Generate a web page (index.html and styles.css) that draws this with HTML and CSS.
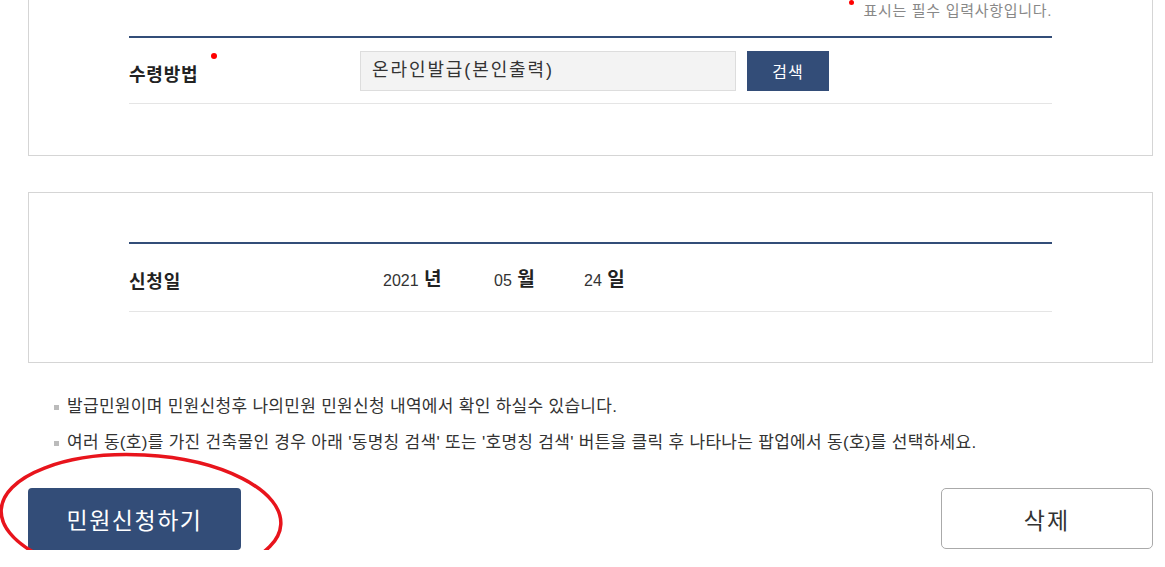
FILE: index.html
```html
<!DOCTYPE html>
<html lang="ko">

<head>
    <meta charset="UTF-8">
    <meta name="viewport" content="width=device-width, initial-scale=1.0">
    <title>민원신청</title>
    <link rel="stylesheet" href="styles.css">
</head>

<body>
    <div id="contenido">
        <div class="panel panel-cortado">
            <p class="aviso"><span class="punto"></span>표시는 필수 입력사항입니다.</p>
            <div class="tabla">
                <div class="fila">
                    <div class="etiqueta requerido">수령방법</div>
                    <div class="valor">
                        <div class="campo">온라인발급(본인출력)</div>
                        <button class="boton-buscar">검색</button>
                    </div>
                </div>
            </div>
        </div>

        <div class="panel panel-fecha">
            <div class="tabla">
                <div class="fila fila-fecha">
                    <div class="etiqueta">신청일</div>
                    <div class="valor fecha">
                        <span class="anio">2021 <b>년</b></span>
                        <span class="mes">05 <b>월</b></span>
                        <span>24 <b>일</b></span>
                    </div>
                </div>
            </div>
        </div>

        <ul class="notas">
            <li>발급민원이며 민원신청후 나의민원 민원신청 내역에서 확인 하실수 있습니다.</li>
            <li>여러 동(호)를 가진 건축물인 경우 아래 '동명칭 검색' 또는 '호명칭 검색' 버튼을 클릭 후 나타나는 팝업에서 동(호)를 선택하세요.</li>
        </ul>

        <div class="acciones">
            <button class="boton-enviar">민원신청하기</button>
            <button class="boton-borrar">삭제</button>
            <svg class="marca" width="300" height="140" viewBox="0 0 300 140">
                <ellipse cx="141" cy="65" rx="140" ry="62" transform="rotate(3 141 65)" fill="none" stroke="#e8141c" stroke-width="3.5"/>
            </svg>
        </div>
    </div>
</body>

</html>
```

FILE: styles.css
```css
* {
    box-sizing: border-box;
}

body {
    margin: 0;
    background-color: white;
    font-family: "Liberation Sans", "Noto Sans CJK KR", sans-serif;
    color: #333;
}

#contenido {
    width: 1153px;
    padding-left: 28px;
}

.panel {
    border: 1px solid #d5d5d5;
    padding: 0 100px;
}

.panel-cortado {
    border-top: 0;
    padding-bottom: 51px;
}

.panel-fecha {
    margin-top: 36px;
    padding-top: 49px;
    padding-bottom: 50px;
}

.aviso {
    margin: 0;
    height: 36px;
    padding-top: 1px;
    text-align: right;
    font-size: 15px;
    letter-spacing: 0.7px;
    line-height: 20px;
    color: #888;
}

.punto {
    display: inline-block;
    width: 5px;
    height: 5px;
    border-radius: 50%;
    background-color: #f00;
    vertical-align: top;
    margin: -1px 9px 0 0;
}

.tabla {
    border-top: 2px solid #334d78;
}

.fila {
    display: flex;
    align-items: center;
    height: 66px;
    border-bottom: 1px solid #e5e5e5;
}

.fila-fecha {
    height: 68px;
}

.etiqueta {
    width: 231px;
    font-size: 18px;
    letter-spacing: 0.8px;
    font-weight: bold;
    color: #222;
    padding-top: 4px;
}

.requerido {
    position: relative;
}

.requerido::after {
    content: "";
    position: absolute;
    left: 82px;
    top: -3px;
    width: 6px;
    height: 6px;
    border-radius: 50%;
    background-color: #f00;
}

.valor {
    display: flex;
    align-items: center;
    gap: 11px;
}

.campo {
    width: 376px;
    height: 40px;
    background-color: #f3f3f3;
    border: 1px solid #ddd;
    padding-left: 11px;
    font-size: 18px;
    letter-spacing: 1.9px;
    line-height: 37px;
    color: #333;
}

.boton-buscar {
    width: 82px;
    height: 40px;
    border: 0;
    background-color: #334d78;
    color: white;
    font-family: inherit;
    font-size: 16px;
    letter-spacing: 1px;
}

.fecha {
    gap: 0;
    padding-left: 23px;
    font-size: 16px;
    color: #333;
}

.fecha span {
    white-space: nowrap;
}

.fecha .anio {
    width: 111px;
}

.fecha .mes {
    width: 90px;
}

.fecha b {
    font-size: 19px;
    color: #222;
    margin-left: 1px;
}

.notas {
    list-style: none;
    margin: 32px 0 0;
    padding: 0 0 0 26px;
}

.notas li {
    position: relative;
    padding-left: 13px;
    font-size: 17px;
    letter-spacing: 0.3px;
    line-height: 24px;
    color: #333;
    margin-bottom: 12px;
}

.notas li::before {
    content: "";
    position: absolute;
    left: 0;
    top: 10px;
    width: 5px;
    height: 5px;
    background-color: #bbb;
}

.acciones {
    position: relative;
    display: flex;
    justify-content: space-between;
    margin-top: 33px;
}

.boton-enviar {
    width: 213px;
    height: 62px;
    border: 0;
    border-radius: 4px;
    background-color: #334d78;
    color: white;
    font-family: inherit;
    font-size: 23px;
    letter-spacing: 1.5px;
}

.boton-borrar {
    width: 212px;
    height: 61px;
    border: 1px solid #aaa;
    border-radius: 5px;
    background-color: white;
    color: #333;
    font-family: inherit;
    font-size: 23px;
    letter-spacing: 2px;
}

.marca {
    position: absolute;
    left: -28px;
    top: -36px;
}
```
